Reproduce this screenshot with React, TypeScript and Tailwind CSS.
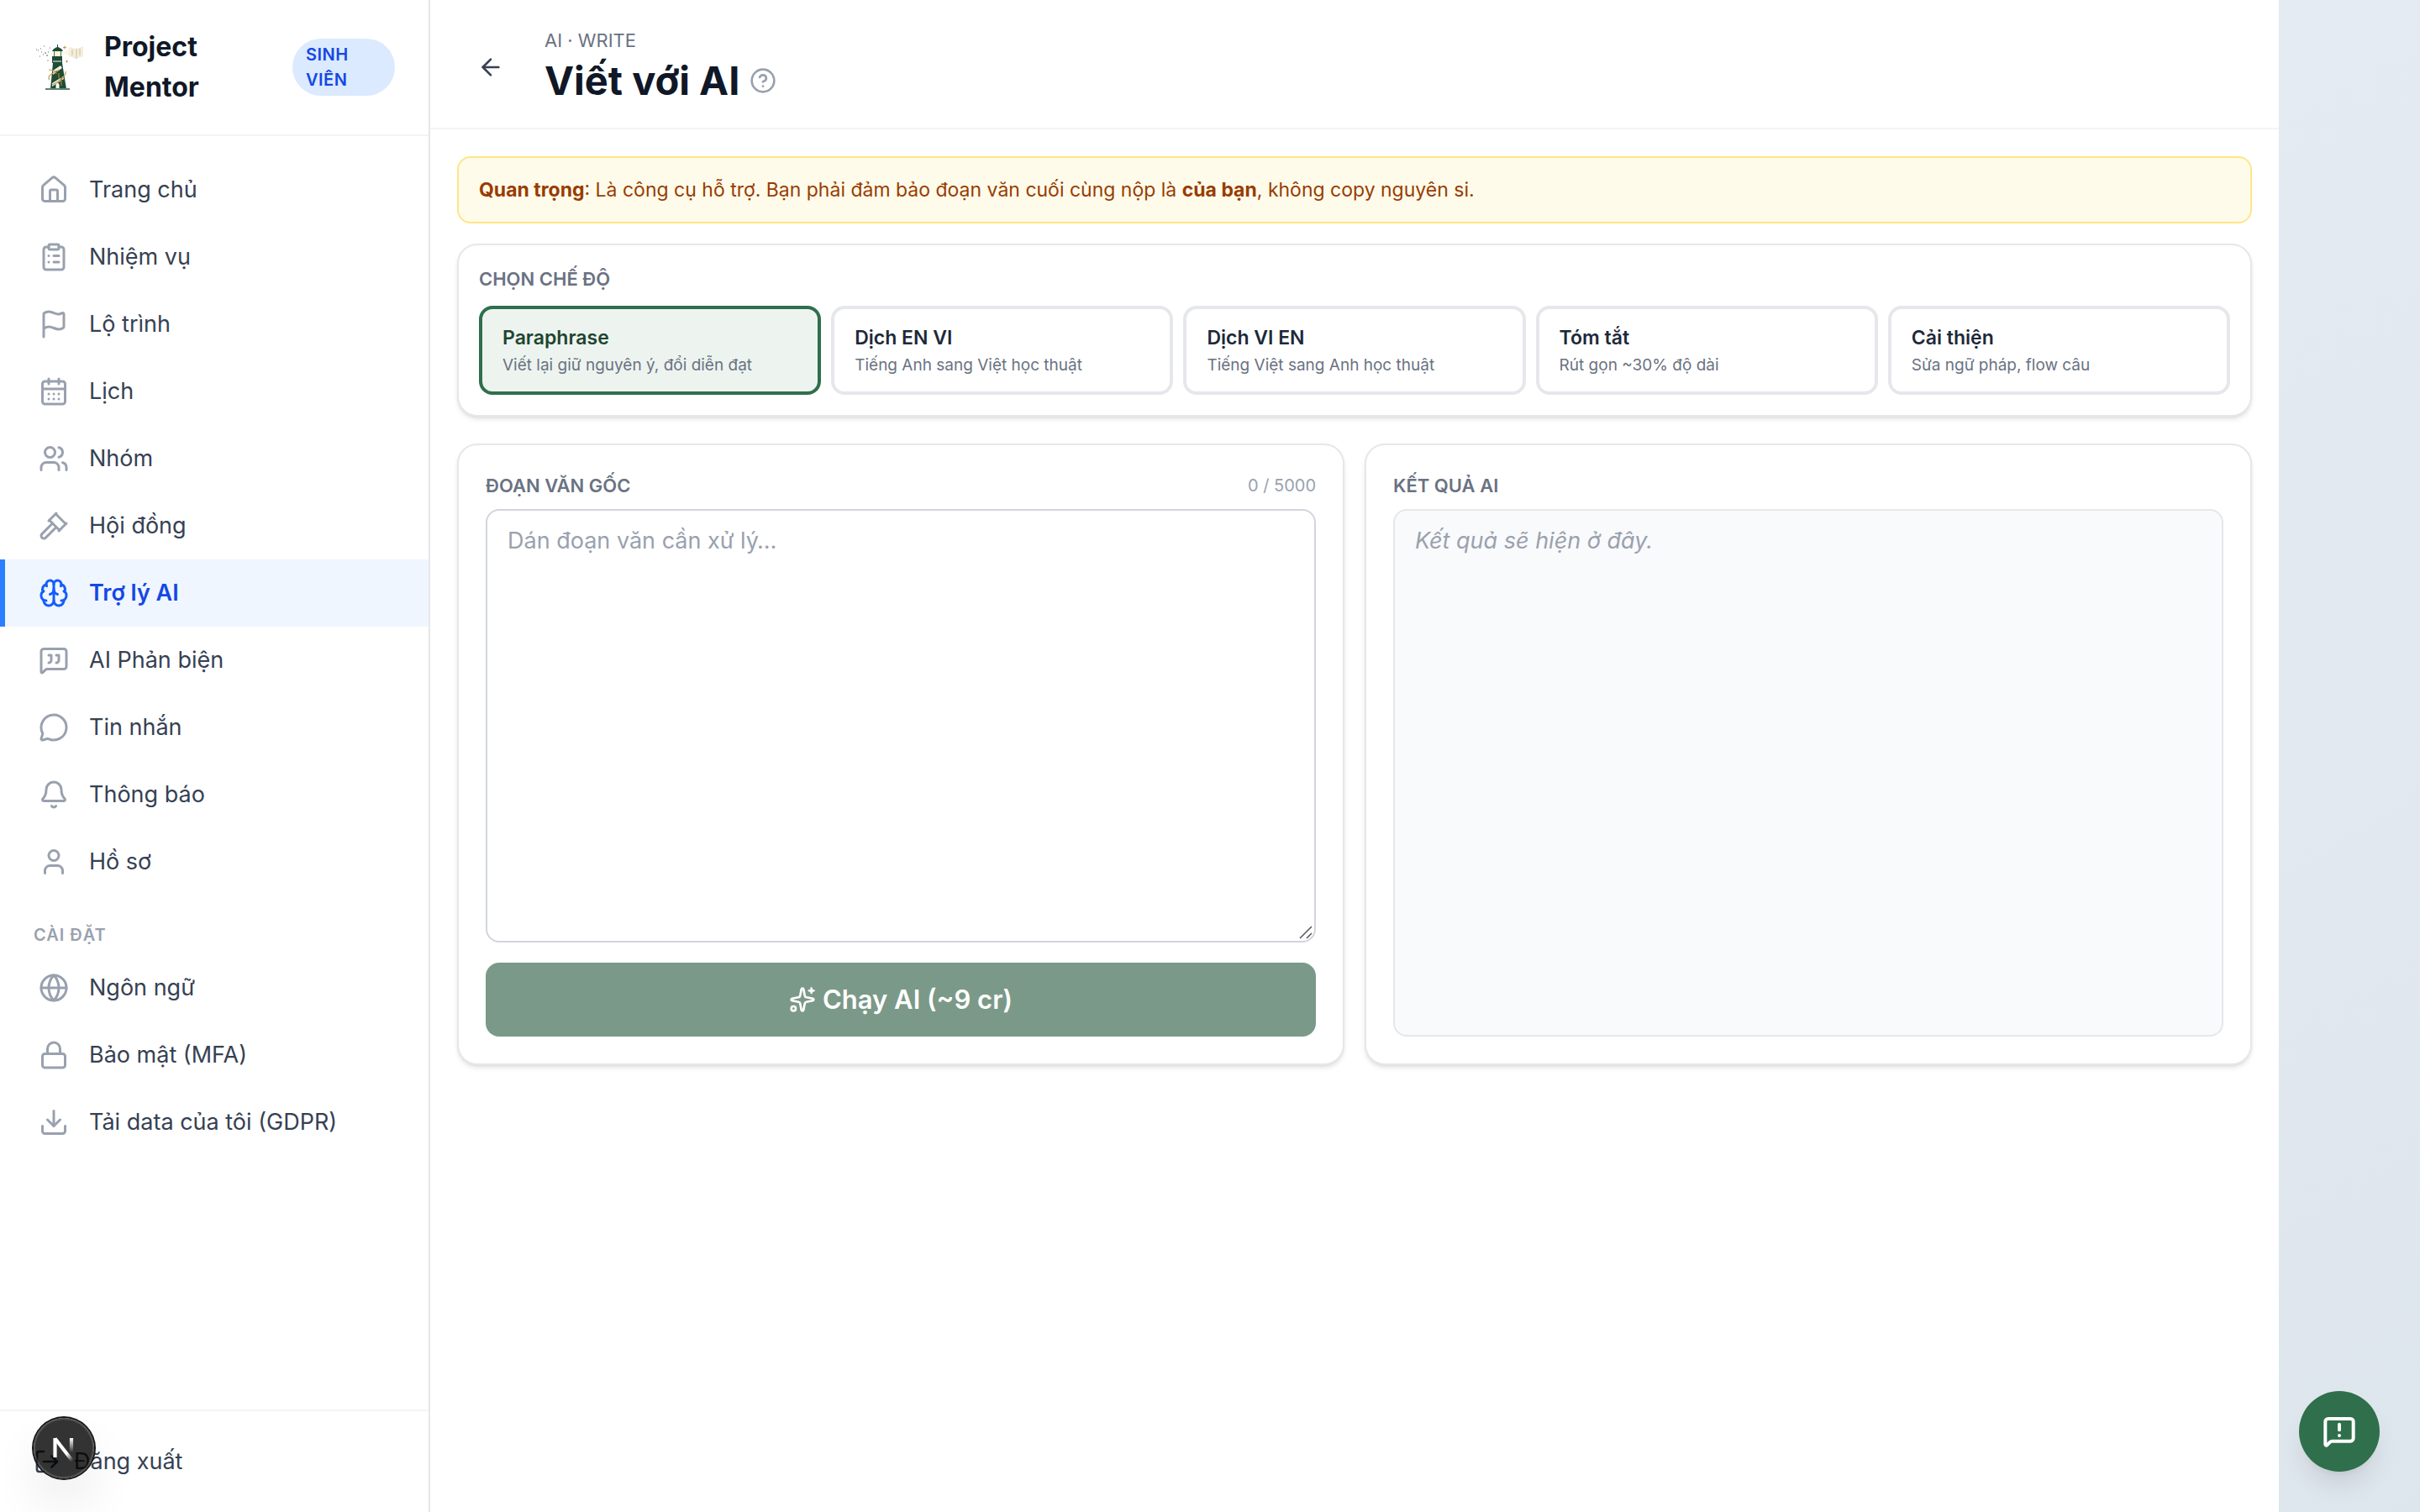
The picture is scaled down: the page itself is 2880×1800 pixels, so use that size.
import { useState } from 'react';
import {
    ArrowLeft,
    Bell,
    Brain,
    CalendarDays,
    CircleQuestionMark,
    ClipboardList,
    Download,
    Flag,
    Gavel,
    Globe,
    House,
    Lock,
    LogOut,
    MessageCircle,
    MessageSquareQuote,
    MessageSquareWarning,
    Sparkles,
    User,
    Users,
} from 'lucide-react';
import type { LucideIcon } from 'lucide-react';

type NavEntry = { label: string; icon: LucideIcon; active?: boolean };

const mainNav: NavEntry[] = [
    { label: 'Trang chủ', icon: House },
    { label: 'Nhiệm vụ', icon: ClipboardList },
    { label: 'Lộ trình', icon: Flag },
    { label: 'Lịch', icon: CalendarDays },
    { label: 'Nhóm', icon: Users },
    { label: 'Hội đồng', icon: Gavel },
    { label: 'Trợ lý AI', icon: Brain, active: true },
    { label: 'AI Phản biện', icon: MessageSquareQuote },
    { label: 'Tin nhắn', icon: MessageCircle },
    { label: 'Thông báo', icon: Bell },
    { label: 'Hồ sơ', icon: User },
];

const settingsNav: NavEntry[] = [
    { label: 'Ngôn ngữ', icon: Globe },
    { label: 'Bảo mật (MFA)', icon: Lock },
    { label: 'Tải data của tôi (GDPR)', icon: Download },
];

const modes = [
    { id: 'paraphrase', title: 'Paraphrase', hint: 'Viết lại giữ nguyên ý, đổi diễn đạt' },
    { id: 'en-vi', title: 'Dịch EN VI', hint: 'Tiếng Anh sang Việt học thuật' },
    { id: 'vi-en', title: 'Dịch VI EN', hint: 'Tiếng Việt sang Anh học thuật' },
    { id: 'summary', title: 'Tóm tắt', hint: 'Rút gọn ~30% độ dài' },
    { id: 'improve', title: 'Cải thiện', hint: 'Sửa ngữ pháp, flow câu' },
];

function Lighthouse() {
    return (
        <svg viewBox="0 0 60 60" className="size-15 shrink-0" aria-hidden="true">
            {/* tower */}
            <path d="M23 25h11l5 31H20z" fill="#1d4d35" />
            <path d="M23 34l9-6 2 3-11 8zM22 49l13-8 1 3-14 9z" fill="#f4f1e4" />
            <path d="M29 37h2v6h-2zM32 42h2v10h-2zM26 34h2v4h-2z" fill="#7a6a35" />
            <path d="M26.500 56v-5a2 2 0 0 1 4 0v5z" fill="#fff" />
            <path d="M14 55h29v2H14z" fill="#5c8570" />
            {/* lamp room */}
            <path d="M22 17h12v8H22z" fill="#1d4d35" />
            <path d="M23 22h10v2H23z" fill="#8fa394" />
            <path d="M24 11h9v6h-9z" fill="#fdf5d6" />
            <path d="M24.500 11v6M32.500 11v6" stroke="#1d4d35" strokeWidth="0.8" />
            <path d="M22 11c1-3 4-4 6-5V3h1v3c2 1 5 2 6 5z" fill="#1d4d35" />
            {/* open book in the beam */}
            <path d="M42 6l9 2 8-3v12l-8 3-9-3z" fill="#f3eedd" />
            <path d="M46 9v7M51 8v12M55 8v8" stroke="#cfc39c" />
            <path d="M35 12l7-3v7l-7-2z" fill="#fbf6e4" />
            <path
                d="M18 33c3 0 5 1 7 2M19 45c-4-4 4-9 12-12M38 35c1 4-6 12-16 16"
                fill="none"
                stroke="#c09a4c"
                strokeWidth="1.200"
            />
            {/* sparks */}
            <path d="M35 6.500h4M37 4.500v4M38 23h3M39.500 21.500v3M16 22h2" stroke="#c09a4c" />
            <path
                d="M5 10h1M8 8h1M12 5h1M13 13h2M9 12h1M7 17h1M11 15h1M17 12h1M15 16h2M19 7h1M3 9h1"
                stroke="#55705a"
            />
        </svg>
    );
}

function NavItem({ label, icon: Icon, active }: NavEntry) {
    return (
        <li>
            <a
                href="#"
                aria-current={active ? 'page' : undefined}
                className={`flex items-center gap-6 border-l-6 px-10 py-5 text-[27px] leading-10 ${
                    active
                        ? 'border-blue-500 bg-blue-50 font-semibold text-blue-700'
                        : 'border-transparent text-gray-700'
                }`}
            >
                <Icon className={`size-9 shrink-0 ${active ? 'text-blue-600' : 'text-gray-400'}`} strokeWidth={2} />
                {label}
            </a>
        </li>
    );
}

function Sidebar() {
    return (
        <aside className="flex w-128 shrink-0 flex-col border-r-2 border-gray-200 bg-white">
            <div className="flex items-center gap-6 border-b-2 border-gray-100 px-10 py-8">
                <Lighthouse />
                <span className="flex-1 text-[32px] leading-12 font-bold text-gray-900">Project Mentor</span>
                <span className="w-[122px] rounded-full bg-blue-100 px-4 py-1 text-[20px] leading-[30px] font-semibold tracking-wide text-blue-700">
                    SINH VIÊN
                </span>
            </div>
            <nav className="flex-1 py-6">
                <ul>
                    {mainNav.map((item) => (
                        <NavItem key={item.label} {...item} />
                    ))}
                </ul>
                <h2 className="px-10 pt-8 pb-2 text-[20px] leading-[30px] font-semibold tracking-wider text-gray-400">
                    CÀI ĐẶT
                </h2>
                <ul>
                    {settingsNav.map((item) => (
                        <NavItem key={item.label} {...item} />
                    ))}
                </ul>
            </nav>
            <div className="border-t-2 border-gray-100 px-10 py-10">
                <button type="button" className="flex items-center gap-4 text-[27px] leading-10 text-gray-700">
                    <LogOut className="size-8" />
                    Đăng xuất
                </button>
            </div>
        </aside>
    );
}

function DevBadge() {
    return (
        <button
            type="button"
            aria-label="Next.js"
            className="fixed bottom-10 left-10 flex size-18 items-center justify-center rounded-full bg-black/80 shadow-[0_0_0_2px_#171717,inset_0_0_0_2px_rgba(255,255,255,0.14),0_32px_64px_-16px_rgba(0,0,0,0.24)]"
        >
            <svg viewBox="0 0 40 40" className="size-10" fill="none" strokeWidth="4.200">
                <defs>
                    <linearGradient id="diag" x1="19" y1="21" x2="30" y2="35" gradientUnits="userSpaceOnUse">
                        <stop offset="0.4" stopColor="#fff" />
                        <stop offset="1" stopColor="#fff" stopOpacity="0" />
                    </linearGradient>
                    <linearGradient id="stem" x1="29" y1="8" x2="29" y2="25" gradientUnits="userSpaceOnUse">
                        <stop stopColor="#fff" />
                        <stop offset="1" stopColor="#fff" stopOpacity="0" />
                    </linearGradient>
                </defs>
                <path d="M29 8v17" stroke="url(#stem)" />
                <path d="M9.500 31V8" stroke="#fff" />
                <path d="M9.500 8.500l20.500 26.500" stroke="url(#diag)" />
            </svg>
        </button>
    );
}

export default function App() {
    const [mode, setMode] = useState('paraphrase');
    const [text, setText] = useState('');

    return (
        <div className="flex min-h-screen bg-linear-to-br from-[#ebeff8] to-[#dee6ed] font-['Inter','Liberation_Sans',sans-serif]">
            <Sidebar />

            <main className="max-w-[2200px] flex-1 bg-white">
                <header className="flex items-center gap-6 border-b-2 border-gray-100 px-8 pt-8 pb-6">
                    <button type="button" aria-label="Quay lại" className="flex size-20 items-center justify-center text-gray-700">
                        <ArrowLeft className="size-8" />
                    </button>
                    <div>
                        <p className="text-[22px] leading-8 text-gray-500">AI · WRITE</p>
                        <div className="flex items-center gap-3">
                            <h1 className="text-[47px] leading-16 font-bold text-gray-900">Viết với AI</h1>
                            <button type="button" aria-label="Trợ giúp" className="text-gray-400">
                                <CircleQuestionMark className="size-8" />
                            </button>
                        </div>
                    </div>
                </header>

                <div className="p-8">
                    <p className="rounded-2xl border-2 border-amber-200 bg-amber-50 px-6 py-5 text-[23px] leading-9 text-amber-800">
                        <strong>Quan trọng</strong>: Là công cụ hỗ trợ. Bạn phải đảm bảo đoạn văn cuối cùng nộp là{' '}
                        <strong>của bạn</strong>, không copy nguyên si.
                    </p>

                    <section className="mt-6 rounded-3xl border-2 border-gray-200 bg-white p-6 shadow-md">
                        <h2 className="text-[22px] leading-8 font-semibold text-gray-500">CHỌN CHẾ ĐỘ</h2>
                        <div className="mt-4 grid grid-cols-5 gap-3">
                            {modes.map((m) => (
                                <button
                                    key={m.id}
                                    type="button"
                                    aria-pressed={mode === m.id}
                                    onClick={() => setMode(m.id)}
                                    className={`rounded-2xl border-4 px-6 py-4 text-left ${
                                        mode === m.id
                                            ? 'border-[#2f6f4b] bg-[#edf4ef] text-[#1e4530]'
                                            : 'border-gray-200 bg-white text-gray-800'
                                    }`}
                                >
                                    <span className="block text-[23px] leading-9 font-semibold">{m.title}</span>
                                    <span className="block text-[19px] leading-[30px] text-gray-500">{m.hint}</span>
                                </button>
                            ))}
                        </div>
                    </section>

                    <div className="mt-8 grid grid-cols-2 gap-6">
                        <section className="rounded-3xl border-2 border-gray-200 bg-white p-8 shadow-md">
                            <div className="flex items-center justify-between leading-8">
                                <label htmlFor="source" className="text-[22px] font-semibold text-gray-500">
                                    ĐOẠN VĂN GỐC
                                </label>
                                <span className="text-[20px] text-gray-400">{text.length} / 5000</span>
                            </div>
                            <div className="relative mt-3">
                                <textarea
                                    id="source"
                                    rows={12}
                                    maxLength={5000}
                                    value={text}
                                    onChange={(e) => setText(e.target.value)}
                                    placeholder="Dán đoạn văn cần xử lý…"
                                    className="block w-full resize-none rounded-2xl border-2 border-gray-300 px-6 py-4 text-[27px] leading-10 text-gray-900 placeholder:text-gray-400"
                                />
                                <svg
                                    viewBox="0 0 16 16"
                                    className="pointer-events-none absolute right-1 bottom-1 size-4"
                                    stroke="#555"
                                    strokeWidth="1.500"
                                    aria-hidden="true"
                                >
                                    <path d="M1 15L15 1M9 15l6-6" />
                                </svg>
                            </div>
                            <button
                                type="button"
                                className="mt-6 flex h-22 w-full items-center justify-center gap-2 rounded-2xl bg-[#7b9988] text-[31px] font-semibold text-white"
                            >
                                <Sparkles className="size-8" />
                                Chạy AI (~9 cr)
                            </button>
                        </section>

                        <section className="flex flex-col rounded-3xl border-2 border-gray-200 bg-white p-8 shadow-md">
                            <h2 className="text-[22px] leading-8 font-semibold text-gray-500">KẾT QUẢ AI</h2>
                            <div className="mt-3 flex-1 rounded-2xl border-2 border-gray-200 bg-gray-50 px-6 py-4 text-[27px] leading-10 text-gray-400 italic">
                                Kết quả sẽ hiện ở đây.
                            </div>
                        </section>
                    </div>
                </div>
            </main>

            <DevBadge />
            <button
                type="button"
                aria-label="Gửi phản hồi"
                className="fixed right-12 bottom-12 flex size-24 items-center justify-center rounded-full bg-[#2f6f4b] text-white shadow-[0_20px_30px_-6px_rgba(0,0,0,0.1),0_8px_12px_-8px_rgba(0,0,0,0.1)]"
            >
                <MessageSquareWarning className="size-10" strokeWidth={2.4} />
            </button>
        </div>
    );
}
